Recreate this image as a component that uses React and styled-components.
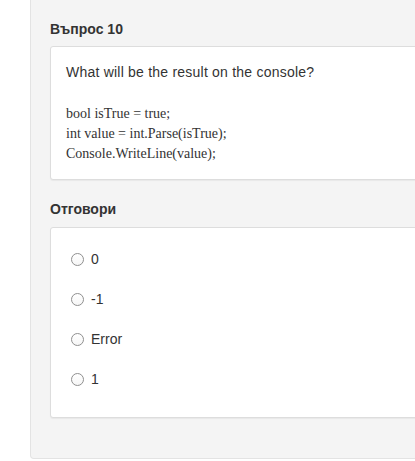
import styled, { createGlobalStyle } from "styled-components";

const GlobalStyle = createGlobalStyle`
  html, body {
    margin: 0;
    padding: 0;
    background: #fff;
    overflow: hidden;
  }
  body {
    font-family: "Liberation Sans", Arial, sans-serif;
    font-size: 14px;
    line-height: 20px;
    color: #333;
  }
`

const Well = styled.section`
  margin-left: 30px;
  width: 520px;
  height: 459px;
  box-sizing: border-box;
  padding: 19px 19px 39px;
  background: #f4f4f4;
  border: 1px solid #e3e3e3;
  border-top: none;
  border-radius: 0 0 4px 4px;
`

const Heading = styled.h4`
  margin: 0 0 ${props => props.$gap || 7}px;
  font-size: 14px;
  line-height: 20px;
  font-weight: bold;
  color: #333;
`

const Panel = styled.div`
  background: #fff;
  border: 1px solid #ddd;
  border-radius: 3px;
  box-shadow: 0 1px 1px rgba(0, 0, 0, .05);
  margin-bottom: ${props => props.$spacing || 0}px;
`

const QuestionBody = styled.div`
  padding: 15px;
`

const Prompt = styled.p`
  margin: 0 0 22px;
  letter-spacing: 0.22px;
`

const Code = styled.div`
  font-family: "Liberation Serif", "Times New Roman", serif;
  font-size: 14px;
  line-height: 20px;
  color: #333;
`

const AnswerList = styled.div`
  padding: 11px 20px 18px;
`

const Answer = styled.label`
  display: flex;
  align-items: center;
  gap: 7px;
  height: 40px;
  cursor: pointer;
`

const Radio = styled.input`
  appearance: none;
  margin: 0;
  width: 13px;
  height: 13px;
  border: 1px solid #8f8f8f;
  border-radius: 50%;
  background: linear-gradient(#fff, #f6f6f6);
  flex: none;

  &:checked {
    border-color: #2a7ae2;
    box-shadow: inset 0 0 0 3px #fff;
    background: #2a7ae2;
  }
`

const answers = ["0", "-1", "Error", "1"];

const App = () => {
  return (
    <>
      <GlobalStyle />
      <Well>
        <Heading $gap={7}>Въпрос 10</Heading>
        <Panel $spacing={19}>
          <QuestionBody>
            <Prompt>What will be the result on the console?</Prompt>
            <Code>
              <div>bool isTrue = true;</div>
              <div>int value = int.Parse(isTrue);</div>
              <div>Console.WriteLine(value);</div>
            </Code>
          </QuestionBody>
        </Panel>
        <Heading $gap={8}>Отговори</Heading>
        <Panel>
          <AnswerList>
            {answers.map((a) => (
              <Answer key={a}>
                <Radio type="radio" name="answer" value={a} />
                <span>{a}</span>
              </Answer>
            ))}
          </AnswerList>
        </Panel>
      </Well>
    </>
  );
};

export default App;
